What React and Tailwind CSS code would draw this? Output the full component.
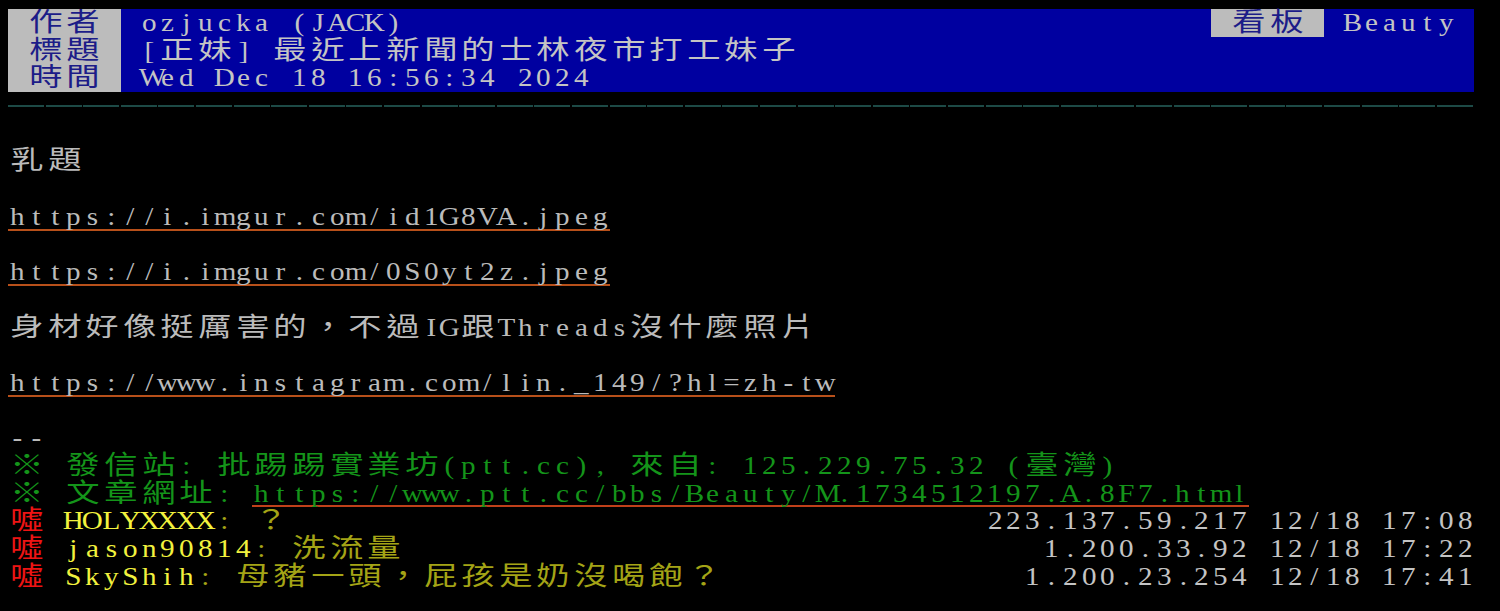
const isWide = (ch) => {
  const c = ch.codePointAt(0);
  return c >= 0x2e80 || c === 0x203b;
};

// PTT-style fixed grid: half-width chars take one 18.8px column, CJK take two
function Cells({ text }) {
  return Array.from(text).map((ch, i) =>
    isWide(ch) ? (
      <span key={i} className="w-[37.6px] shrink-0 text-center scale-x-[1.28]">
        {ch}
      </span>
    ) : (
      <span key={i} className="w-[18.8px] shrink-0 text-center scale-x-[1.12]">
        {ch === " " ? "\u00a0" : ch}
      </span>
    )
  );
}

const Line = ({ children }) => <div className="flex h-[27.7px]">{children}</div>;

const Tag = ({ text }) => (
  <div className="flex w-[112.8px] shrink-0 bg-[#bcbcbc] pl-[18.8px] text-[#1c1c88]">
    <Cells text={text} />
  </div>
);

const Link = ({ text, className = "shadow-[inset_0_-2px_0_0_#b8501a]" }) => (
  <span className={`flex ${className}`}>
    <Cells text={text} />
  </span>
);

const pushes = [
  { user: "HOLYXXXX", content: ": ？", ip: "223.137.59.217 12/18 17:08" },
  { user: "jason90814", content: ": 洗流量", ip: "1.200.33.92 12/18 17:22" },
  { user: "SkyShih", content: ": 母豬一頭，屁孩是奶沒喝飽？", ip: "1.200.23.254 12/18 17:41" },
];

export default function App() {
  return (
    <div className="min-h-[611px] w-full bg-black pt-[9px] pl-[8px] font-['Liberation_Serif','Noto_Sans_CJK_TC',serif] text-[26px] leading-[27.7px] text-[#bbbbbb]">
      <div className="w-[1466.4px]">
        <Line>
          <Tag text="作者" />
          <div className="flex flex-1 bg-[#0000a0] pl-[18.8px] text-[#c4c4c4]">
            <Cells text="ozjucka (JACK)" />
            <div className="flex-1" />
            <div className="flex bg-[#bcbcbc] px-[18.8px] text-[#1c1c88]">
              <Cells text="看板" />
            </div>
            <div className="flex px-[18.8px]">
              <Cells text="Beauty" />
            </div>
          </div>
        </Line>
        <Line>
          <Tag text="標題" />
          <div className="flex flex-1 bg-[#0000a0] pl-[18.8px] text-[#c4c4c4]">
            <Cells text="[正妹] 最近上新聞的士林夜市打工妹子" />
          </div>
        </Line>
        <Line>
          <Tag text="時間" />
          <div className="flex flex-1 bg-[#0000a0] pl-[18.8px] text-[#c4c4c4]">
            <Cells text="Wed Dec 18 16:56:34 2024" />
          </div>
        </Line>

        <div className="flex h-[27.7px] items-center">
          <div className="h-[2px] w-full bg-[repeating-linear-gradient(90deg,#1d4a46_0_36px,transparent_36px_37.6px)]" />
        </div>
        <Line />

        <Line>
          <Cells text="乳題" />
        </Line>
        <Line />
        <Line>
          <Link text="https://i.imgur.com/id1G8VA.jpeg" />
        </Line>
        <Line />
        <Line>
          <Link text="https://i.imgur.com/0S0yt2z.jpeg" />
        </Line>
        <Line />
        <Line>
          <Cells text="身材好像挺厲害的，不過IG跟Threads沒什麼照片" />
        </Line>
        <Line />
        <Line>
          <Link text="https://www.instagram.com/lin._149/?hl=zh-tw" />
        </Line>
        <Line />

        <Line>
          <Cells text="--" />
        </Line>
        <Line>
          <span className="flex text-[#14941a]">
            <Cells text="※ 發信站: 批踢踢實業坊(ptt.cc), 來自: 125.229.75.32 (臺灣)" />
          </span>
        </Line>
        <Line>
          <span className="flex text-[#14941a]">
            <Cells text="※ 文章網址: " />
            <Link text="https://www.ptt.cc/bbs/Beauty/M.1734512197.A.8F7.html" className="shadow-[inset_0_-2px_0_0_#c0401a]" />
          </span>
        </Line>

        {pushes.map((p) => (
          <Line key={p.user}>
            <span className="flex text-[#ee1414]">
              <Cells text="噓 " />
            </span>
            <span className="flex text-[#f2f23e]">
              <Cells text={p.user} />
            </span>
            <span className="flex text-[#a4a416]">
              <Cells text={p.content} />
            </span>
            <div className="flex-1" />
            <span className="flex text-[#c4c4c4]">
              <Cells text={p.ip} />
            </span>
          </Line>
        ))}
      </div>
    </div>
  );
}
